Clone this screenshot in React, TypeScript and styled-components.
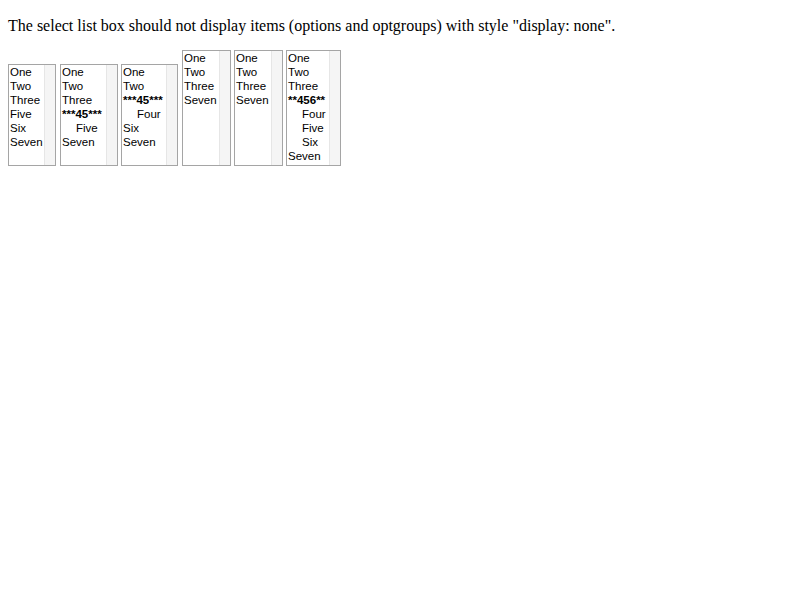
import React from "react";
import styled, { createGlobalStyle } from "styled-components";

const Global = createGlobalStyle`
  html, body { margin: 0; padding: 0; background: #fff; }
  body { padding: 8px; font-family: "Liberation Serif", "Times New Roman", serif; font-size: 16px; color: #000; }
`;

const Intro = styled.p`
  margin: 9px 0 15px;
  line-height: 18px;
`;

const Row = styled.div`
  display: flex;
  align-items: flex-end;
`;

const ListBox = styled.div<{ $w: number; $rows: number; $gap: number }>`
  width: ${(p) => p.$w}px;
  height: ${(p) => p.$rows * 14 + 4}px;
  margin-left: ${(p) => p.$gap}px;
  box-sizing: border-box;
  border: 1px solid #a5a5a5;
  display: flex;
  background: #fff;
`;

const Items = styled.div`
  flex: 1;
  padding: 0 0 0 1px;
  font-family: "Liberation Sans", Arial, sans-serif;
  font-size: 11.5px;
  line-height: 14px;
  white-space: nowrap;
  overflow: hidden;
`;

const Item = styled.div<{ $indent?: boolean; $bold?: boolean }>`
  height: 14px;
  padding-left: ${(p) => (p.$indent ? 14 : 0)}px;
  font-weight: ${(p) => (p.$bold ? "bold" : "normal")};
`;

const Track = styled.div`
  width: 10px;
  background: #f5f5f5;
  border-left: 1px solid #e6e6e6;
`;

type Entry = { t: string; indent?: boolean; bold?: boolean };

const boxes: { w: number; rows: number; gap: number; items: Entry[] }[] = [
  { w: 48, rows: 7, gap: 0, items: [{ t: "One" }, { t: "Two" }, { t: "Three" }, { t: "Five" }, { t: "Six" }, { t: "Seven" }] },
  { w: 58, rows: 7, gap: 4, items: [{ t: "One" }, { t: "Two" }, { t: "Three" }, { t: "***45***", bold: true }, { t: "Five", indent: true }, { t: "Seven" }] },
  { w: 57, rows: 7, gap: 3, items: [{ t: "One" }, { t: "Two" }, { t: "***45***", bold: true }, { t: "Four", indent: true }, { t: "Six" }, { t: "Seven" }] },
  { w: 49, rows: 8, gap: 4, items: [{ t: "One" }, { t: "Two" }, { t: "Three" }, { t: "Seven" }] },
  { w: 49, rows: 8, gap: 3, items: [{ t: "One" }, { t: "Two" }, { t: "Three" }, { t: "Seven" }] },
  { w: 55, rows: 8, gap: 3, items: [{ t: "One" }, { t: "Two" }, { t: "Three" }, { t: "**456**", bold: true }, { t: "Four", indent: true }, { t: "Five", indent: true }, { t: "Six", indent: true }, { t: "Seven" }] },
];

export default function App() {
  return (
    <>
      <Global />
      <Intro>The select list box should not display items (options and optgroups) with style "display: none".</Intro>
      <Row>
        {boxes.map((b, i) => (
          <ListBox key={i} $w={b.w} $rows={b.rows} $gap={b.gap}>
            <Items>
              {b.items.map((it, j) => (
                <Item key={j} $indent={it.indent} $bold={it.bold}>
                  {it.t}
                </Item>
              ))}
            </Items>
            <Track />
          </ListBox>
        ))}
      </Row>
    </>
  );
}
